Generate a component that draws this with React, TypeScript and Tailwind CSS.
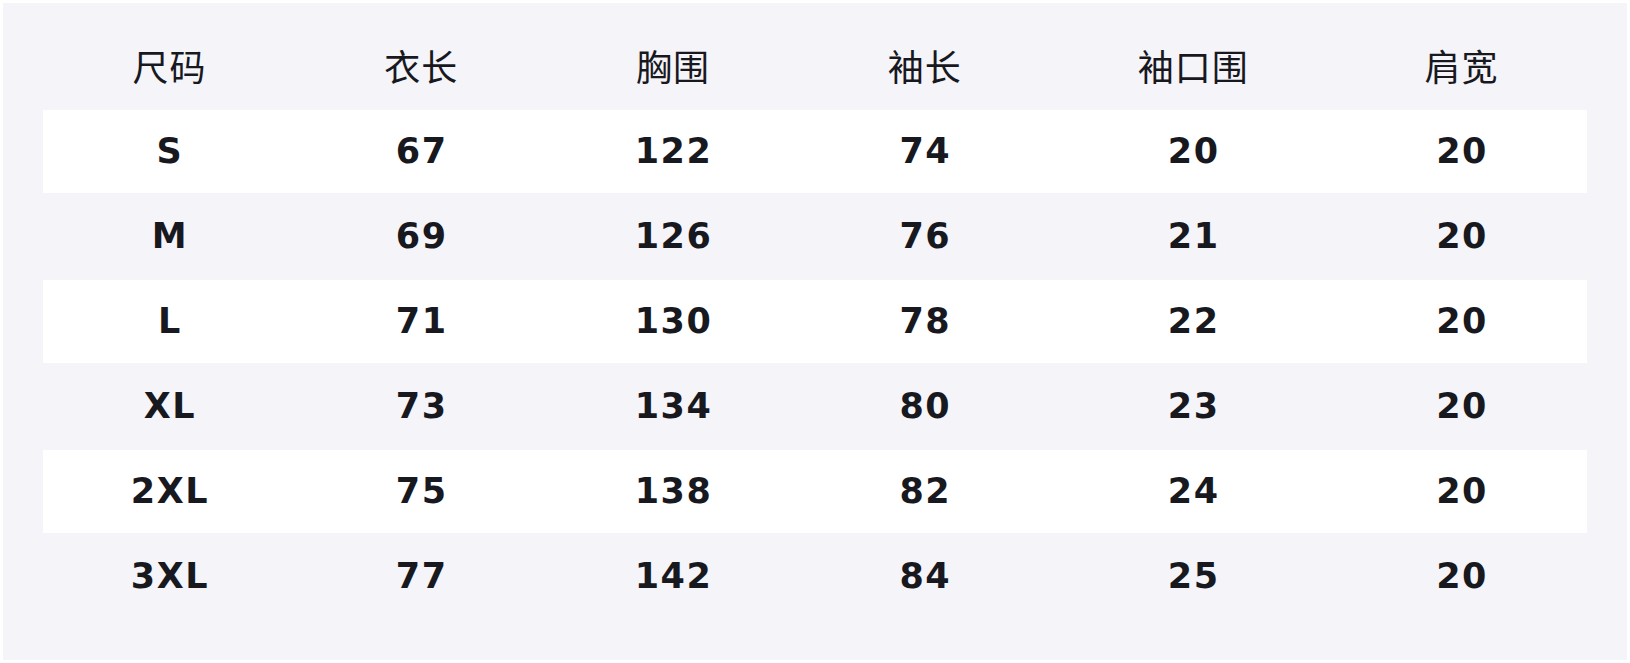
const headers = ["尺码", "衣长", "胸围", "袖长", "袖口围", "肩宽"];

const rows = [
    ["S", "67", "122", "74", "20", "20"],
    ["M", "69", "126", "76", "21", "20"],
    ["L", "71", "130", "78", "22", "20"],
    ["XL", "73", "134", "80", "23", "20"],
    ["2XL", "75", "138", "82", "24", "20"],
    ["3XL", "77", "142", "84", "25", "20"],
];

const cols = "grid grid-cols-[1fr_1fr_1fr_1fr_285px_1fr]";

export default function App() {
    return (
        <div className="w-[1630px] h-[663px] bg-white p-[3px] font-['DejaVu_Sans','Noto_Sans_CJK_SC',sans-serif] text-[#18181f]">
            <div className="h-full bg-[#f4f4f9] px-[40px] pt-[24px] pb-[40px]">
                {/* header */}
                <div className={`${cols} h-[83px] items-center text-[36px] tracking-[1px]`}>
                    {headers.map((h) => (
                        <div key={h} className="text-center leading-none pl-[1px]">{h}</div>
                    ))}
                </div>

                {/* size rows, white stripes on odd rows */}
                {rows.map((r, i) => (
                    <div
                        key={r[0]}
                        className={`${cols} items-center text-[35px] font-bold tracking-[1.5px] ${i % 2 === 0 ? "h-[83px] bg-white" : "h-[87px]"}`}
                    >
                        {r.map((v, j) => (
                            <div key={j} className="text-center leading-none pl-[2px]">{v}</div>
                        ))}
                    </div>
                ))}
            </div>
        </div>
    );
}
